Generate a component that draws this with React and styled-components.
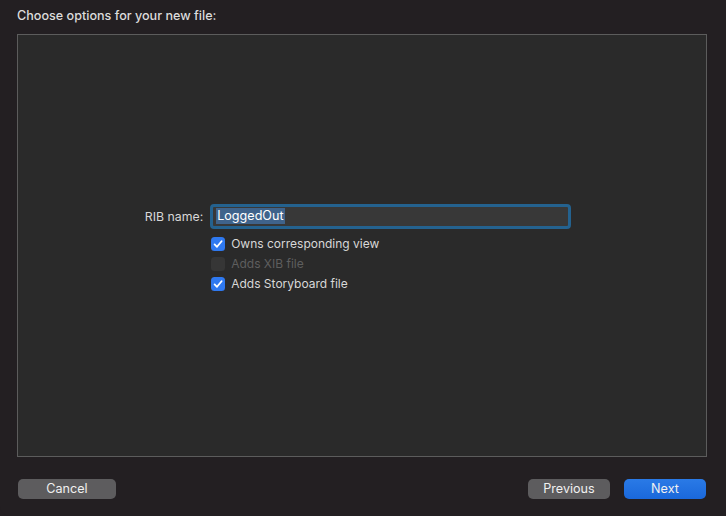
import React from "react";
import styled, { createGlobalStyle } from "styled-components";

const Global = createGlobalStyle`
  html, body { margin: 0; padding: 0; background: #231f22; }
  body { font-family: "Inter", "Liberation Sans", sans-serif; -webkit-font-smoothing: antialiased; }
  ::selection { background: #3f638b; color: #fff; }
`;

const Window = styled.div`
  width: 726px;
  height: 516px;
  box-sizing: border-box;
  background: #231f22;
  display: flex;
  flex-direction: column;
  border-radius: 0 0 10px 10px;
  overflow: hidden;
`;

const Title = styled.div`
  height: 34px;
  box-sizing: border-box;
  padding: 8px 0 0 17px;
  font-size: 12.6px;
  line-height: 16px;
  color: #dcdcdc;
  font-weight: 500;
`;

const Panel = styled.div`
  margin: 0 19px 0 17px;
  height: 423px;
  box-sizing: border-box;
  background: #2a2a2a;
  border: 1px solid #5c5c5c;
  display: flex;
  align-items: center;
  justify-content: center;
  padding-right: 8px;
`;

const Form = styled.div`
  display: grid;
  grid-template-columns: auto 361px;
  column-gap: 7px;
  row-gap: 5px;
  align-items: center;
  margin-top: 6px;
`;

const Label = styled.div`
  font-size: 12.3px;
  color: #d8d8d8;
  text-align: right;
`;

const FieldRing = styled.div`
  height: 25px;
  box-sizing: border-box;
  border: 3px solid #24628f;
  border-radius: 4px;
  background: #383838;
  display: flex;
  align-items: center;
  padding-left: 3px;
`;

const Selected = styled.span`
  background: #3f638b;
  color: #ffffff;
  font-size: 12.6px;
  line-height: 16px;
  padding: 0 1px;
`;

const Options = styled.div`
  grid-column: 2;
  display: flex;
  flex-direction: column;
  padding-left: 1px;
`;

const Row = styled.div`
  height: 20px;
  display: flex;
  align-items: center;
  gap: 6px;
  font-size: 12px;
  color: ${(p) => (p.$disabled ? "#5e5e5e" : "#d8d8d8")};
`;

const Box = styled.div`
  width: 14px;
  height: 14px;
  border-radius: 3.5px;
  box-sizing: border-box;
  background: ${(p) => (p.$checked ? "#2f79f0" : "#363636")};
  display: flex;
  align-items: center;
  justify-content: center;
`;

const Footer = styled.div`
  flex: 1;
  display: flex;
  align-items: center;
  padding: 4px 20px 0 18px;
  gap: 14px;
`;

const Button = styled.div`
  width: ${(p) => p.$w}px;
  height: 20px;
  border-radius: 5px;
  background: ${(p) => (p.$primary ? "linear-gradient(#2a7ae6, #1a68db)" : "#5d5c5e")};
  color: #f0f0f0;
  font-size: 12.6px;
  display: flex;
  align-items: center;
  justify-content: center;
  margin-right: ${(p) => (p.$push ? "auto" : "0")};
`;

const Check = () => (
  <svg width="10" height="10" viewBox="0 0 10 10">
    <path d="M1.6 5.4 L4 7.8 L8.6 2.2" fill="none" stroke="#fff" strokeWidth="1.8" strokeLinecap="round" strokeLinejoin="round" />
  </svg>
);

export default function App() {
  return (
    <Window>
      <Global />
      <Title>Choose options for your new file:</Title>
      <Panel>
        <Form>
          <Label>RIB name:</Label>
          <FieldRing>
            <Selected>LoggedOut</Selected>
          </FieldRing>
          <Options>
            <Row>
              <Box $checked><Check /></Box>
              Owns corresponding view
            </Row>
            <Row $disabled>
              <Box />
              Adds XIB file
            </Row>
            <Row>
              <Box $checked><Check /></Box>
              Adds Storyboard file
            </Row>
          </Options>
        </Form>
      </Panel>
      <Footer>
        <Button $w={98} $push>Cancel</Button>
        <Button $w={82}>Previous</Button>
        <Button $w={82} $primary>Next</Button>
      </Footer>
    </Window>
  );
}
